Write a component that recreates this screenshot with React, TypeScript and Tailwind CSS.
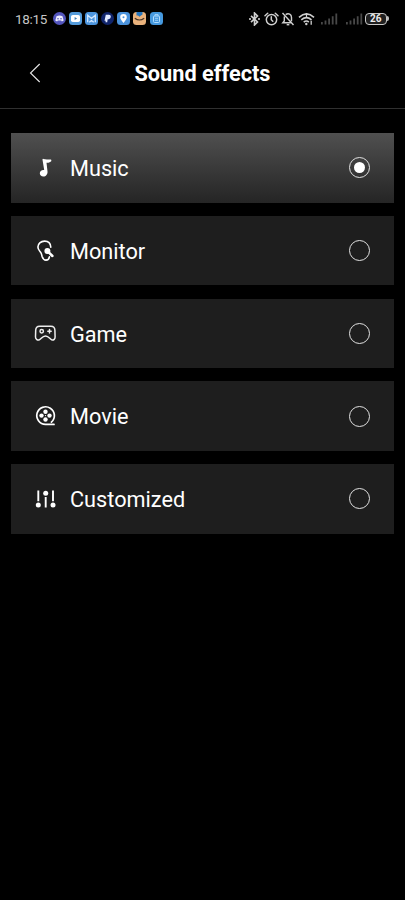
import type { ReactNode } from 'react'

function MusicIcon() {
  return (
    <svg width="24" height="24" viewBox="0 0 24 24" fill="white">
      <path d="M9.500 3.700c-.1-.6.300-1 .9-.8 2.100.7 4.700.5 7.700.6l.3 1.600c-1.200 1.400-3 1.900-4.900 1.700l1 8.700c.3 2.900-1.600 5-4.100 5-2.200 0-3.600-1.400-3.600-3.300 0-2.400 2.200-3.700 4.400-3.200z" />
    </svg>
  )
}

function MonitorIcon() {
  return (
    <svg width="24" height="24" viewBox="0 0 24 24" fill="none" stroke="white" strokeWidth="1.600" strokeLinecap="round" strokeLinejoin="round">
      <path d="M17.800 8.300C17.600 4.400 15 2.100 11.600 2.100c-3.900 0-6.700 2.600-6.700 6 0 2.600 1.500 3.700 2.700 5.100 1.100 1.400 1 2.500 1.500 4.300.7 2.200 2 3.600 3.900 3.600 1.900 0 3.100-1.300 3.400-3.300" />
      <path d="M15.500 13.200l3.900 3.800" strokeWidth="2.500" />
      <circle cx="14.400" cy="12.100" r="3" fill="white" stroke="none" />
    </svg>
  )
}

function GameIcon() {
  return (
    <svg width="24" height="24" viewBox="0 0 24 24" fill="none" stroke="#ededed" strokeWidth="1.500" strokeLinecap="round" strokeLinejoin="round">
      <path d="M6.600 5.200h11.300c2.400 0 3.900 1.600 4 4l.2 6.500c.1 2.400-1.500 3.700-3 3.300-2.200-.6-3.200-4-6.600-4s-4.400 3.400-6.600 4c-1.500.4-3.500-.9-3.400-3.300l.2-6.500c.1-2.400 1.500-4 3.900-4z" />
      <circle cx="8.700" cy="10.300" r="1.700" />
      <path d="M16.500 8.600V12M14.800 10.300h3.400" />
    </svg>
  )
}

function MovieIcon() {
  return (
    <svg width="24" height="24" viewBox="0 0 24 24" fill="none" stroke="white" strokeWidth="1.700" strokeLinecap="round">
      <path d="M21 20.400h-8.500a8.800 8.800 0 1 1 5.900-2.200" />
      <g fill="white" stroke="none">
        <circle cx="12.500" cy="7.700" r="2.200" />
        <circle cx="8.500" cy="11.600" r="2.200" />
        <circle cx="16.500" cy="11.600" r="2.200" />
        <circle cx="12.500" cy="15.500" r="2.200" />
        <circle cx="12.500" cy="11.600" r=".7" />
      </g>
    </svg>
  )
}

function CustomizedIcon() {
  return (
    <svg width="24" height="24" viewBox="0 0 24 24" fill="white" stroke="white" strokeWidth="1.900">
      <path d="M5.300 3.500v10.800M12.700 10v10.500M20 3.500v10.800" />
      <g stroke="none">
        <circle cx="5.300" cy="17.900" r="2.500" />
        <circle cx="12.700" cy="6.200" r="2.500" />
        <circle cx="20" cy="17.900" r="2.500" />
      </g>
    </svg>
  )
}

function Signal() {
  return (
    <svg width="17" height="12" viewBox="0 0 17 12" fill="#484848">
      <path d="M0 9h1.800v2.500H0zM3.600 7.500h1.800v4H3.600zM7.200 5.500H9v6H7.200zM10.800 3.200h1.800v8.300h-1.800zM14.400.5h1.800v11h-1.800z" />
    </svg>
  )
}

function AppBadge({ className, children }: { className: string; children: ReactNode }) {
  return (
    <div className={`h-[13px] w-[13px] overflow-hidden ${className}`}>
      <svg width="13" height="13" viewBox="0 0 13 13">{children}</svg>
    </div>
  )
}

function StatusBar() {
  return (
    <div className="flex h-[37px] items-center pl-[15px] pr-4">
      <span className="w-[38px] text-[13.500px] leading-4 tracking-[-0.3px] text-[#c5c5c5]">18:15</span>
      <div className="flex gap-[3.100px]">
        <AppBadge className="rounded-full bg-[#5355bd]">
          <path d="M3.500 4.200Q6.500 3 9.500 4.200L10.700 8.500 8.900 9.500 8.200 8.600H4.800L4.100 9.500 2.300 8.500z" fill="#eef" />
          <circle cx="5" cy="6.700" r=".8" fill="#5355bd" />
          <circle cx="8" cy="6.700" r=".8" fill="#5355bd" />
        </AppBadge>
        <AppBadge className="rounded-[3.500px] bg-[#559cdb]">
          <rect x="2" y="3" width="9" height="7" rx="1.800" fill="white" />
          <path d="M5.600 5v3l2.500-1.500z" fill="#3e7fb8" />
        </AppBadge>
        <AppBadge className="rounded-[3.500px] bg-[#4d96df]">
          <path d="M2.700 10.300V3.300l3.800 3 3.800-3v7M4.300 10.300l2.200-1.800 2.200 1.800" fill="none" stroke="#d5e9ff" strokeWidth="1.300" />
        </AppBadge>
        <AppBadge className="rounded-full bg-[#10246b]">
          <path d="M4.800 2.800h3c1.700 0 2.300 1.200 1.900 2.500-.4 1.500-1.400 2-3 2l-.5 3H4.500l.2-1.500H3.500z" fill="#e3eaff" />
        </AppBadge>
        <AppBadge className="rounded-[3.500px] bg-[#4b93dc]">
          <path d="M6.500 11C4.500 8.400 3.200 7 3.200 5.200a3.300 3.300 0 0 1 6.600 0C9.800 7 8.500 8.400 6.500 11z" fill="white" />
          <circle cx="6.500" cy="5.200" r="1" fill="#4b93dc" />
        </AppBadge>
        <AppBadge className="rounded-[3.500px] bg-[#e9b27c]">
          <path d="M3.500 0h6v2.500L8 3.500 6.500 4.800 5 3.500H3.500z" fill="#2475bd" />
          <path d="M1.800 6.200Q6.500 9.800 11.200 6.200" fill="none" stroke="#443326" strokeWidth="1.200" />
        </AppBadge>
        <AppBadge className="rounded-[3.500px] bg-[#4599df]">
          <rect x="3.500" y="4" width="6" height="6.500" rx="1" fill="none" stroke="#b1dcff" />
          <path d="M5 4V2.500h3V4M5 6.300h3M5 8.300h3" fill="none" stroke="#b1dcff" strokeWidth=".8" />
        </AppBadge>
      </div>
      <div className="ml-auto flex items-center">
        <svg className="mr-[3px]" width="13" height="14" viewBox="0 0 13 14" fill="none" stroke="#cfcfcf" strokeWidth="1.600">
          <path d="M3 3.800l6.500 6.200L6.500 13V1l3 3L3 10.200" />
          <path d="M1.200 7h1.600M10.200 7h1.600" strokeWidth="1.800" />
        </svg>
        <svg className="mr-[2px]" width="15" height="14" viewBox="0 0 15 14" fill="none" stroke="#cfcfcf" strokeWidth="1.500" strokeLinecap="round">
          <circle cx="7.500" cy="7.600" r="5.200" />
          <path d="M7.300 4.800v3l1.500 1.500M1 3.700l2.700-2.400M14 3.700l-2.700-2.400" />
        </svg>
        <svg className="mr-[3px]" width="14" height="14" viewBox="0 0 14 14" fill="none" stroke="#cfcfcf" strokeWidth="1.400">
          <path d="M1.500 1l11 12M3.300 4.500V9L1.800 10.800h8M4.700 2.600C7.500.5 10.500 2.500 10.500 5.500v3.800" />
          <path d="M5.700 12.700h2.600" />
        </svg>
        <svg className="mr-[6px]" width="17" height="14" viewBox="0 0 17 14" fill="none" stroke="#cfcfcf" strokeWidth="1.600">
          <path d="M1 5.300Q8.500-1.500 16 5.300M3.300 7.800Q8.500 3.400 13.500 7.800M5.700 10.100Q8.500 7.900 10.800 10.100" />
          <circle cx="8.300" cy="12" r="1.200" fill="#cfcfcf" stroke="none" />
          <path d="M13.200 8.800v4M8.500 1v4" strokeWidth="1.300" />
        </svg>
        <Signal />
        <div className="ml-2 mr-[2px] flex"><Signal /></div>
        <div className="flex h-[12px] w-[22.500px] items-center justify-center rounded-[4px] border-[1.500px] border-[#c9c9c9] bg-[#202020] text-[10px] font-bold leading-none text-[#ededed]">26</div>
        <div className="h-[5px] w-[2px] rounded-r-sm bg-[#bdbdbd]" />
      </div>
    </div>
  )
}

const effects = [
  { name: 'Music', icon: <MusicIcon />, selected: true },
  { name: 'Monitor', icon: <MonitorIcon />, selected: false },
  { name: 'Game', icon: <GameIcon />, selected: false },
  { name: 'Movie', icon: <MovieIcon />, selected: false },
  { name: 'Customized', icon: <CustomizedIcon />, selected: false },
]

export default function App() {
  return (
    <main className="h-[900px] w-full overflow-hidden bg-black font-['Roboto',sans-serif] text-white">
      <StatusBar />
      <header className="grid h-[72px] grid-cols-[1fr_auto_1fr] items-center border-b border-[#303030]">
        <button aria-label="Back" className="ml-[29px] w-3">
          <svg width="12" height="20" viewBox="0 0 12 20" fill="none" stroke="#e6e6e6" strokeWidth="1.100">
            <path d="M10.700 1L1.500 10l9.200 9" />
          </svg>
        </button>
        <h1 className="pt-[3px] text-[21.700px] font-bold leading-7">Sound effects</h1>
      </header>
      <div className="flex flex-col gap-[13.250px] px-[11px] pt-6">
        {effects.map(({ name, icon, selected }) => (
          <button
            key={name}
            role="radio"
            aria-checked={selected}
            className={`flex h-[69.500px] items-center pl-[22px] pr-[24px] ${selected ? 'bg-linear-to-b from-[#505050] to-[#252525]' : 'bg-[#1e1e1e]'}`}
          >
            {icon}
            <span className="ml-[13px] pt-[2.500px] text-[21.700px] leading-7">{name}</span>
            <span className="ml-auto flex h-[21px] w-[21px] items-center justify-center rounded-full border border-[#e2e2e2]">
              {selected && <span className="h-[11px] w-[11px] rounded-full bg-white" />}
            </span>
          </button>
        ))}
      </div>
    </main>
  )
}
